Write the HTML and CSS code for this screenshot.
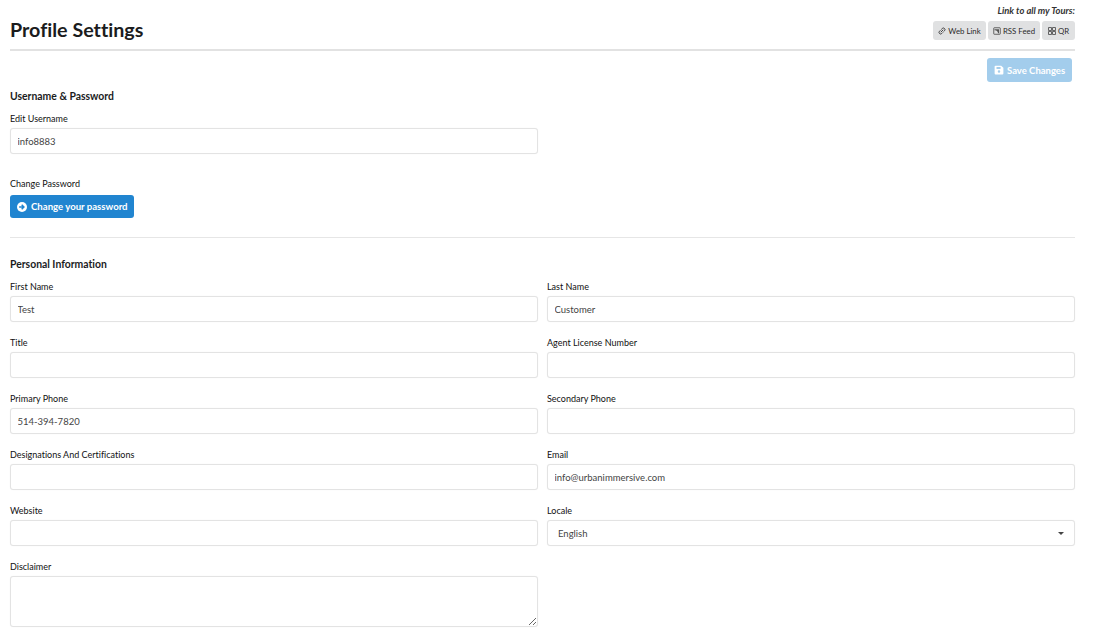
FILE: index.html
```html
<!DOCTYPE html>
<html lang="en">
<head>
<meta charset="utf-8">
<title>Profile Settings</title>
<link rel="stylesheet" href="styles.css">
</head>
<body>
<div class="page">
  <header class="header">
    <h1 class="title">Profile Settings</h1>
    <div class="tours">
      <div class="tours-label">Link to all my Tours:</div>
      <div class="tour-buttons">
        <button class="tour-btn" type="button">
          <svg class="ico" viewBox="0 0 16 16"><path d="M6 10l4-4M7 4.500l1.500-1.500a3 3 0 0 1 4.500 4.500L11.500 9M9 11.500l-1.500 1.500a3 3 0 0 1-4.500-4.500L4.500 7" fill="none" stroke="#333" stroke-width="1.800" stroke-linecap="round"/></svg>Web Link</button>
        <button class="tour-btn" type="button">
          <svg class="ico" viewBox="0 0 16 16"><rect x="1.500" y="1.500" width="13" height="13" rx="1" fill="none" stroke="#444" stroke-width="1.600"/><path d="M3 4.500h9v8h-2a6 6 0 0 0-7-6z" fill="#555"/></svg>RSS Feed</button>
        <button class="tour-btn" type="button">
          <svg class="ico" viewBox="0 0 16 16"><path d="M1 1h6v6H1zM9 1h6v6H9zM1 9h6v6H1zM9 9h6v6H9z" fill="none" stroke="#555" stroke-width="1.800"/></svg>QR</button>
      </div>
    </div>
  </header>

  <div class="save-row">
    <button class="save-btn" type="button">
      <svg class="save-ico" viewBox="0 0 16 16"><path fill-rule="evenodd" d="M2.500 1h9l3.500 3.500v9a1.500 1.500 0 0 1-1.500 1.500h-11A1.500 1.500 0 0 1 1 13.500v-11A1.500 1.500 0 0 1 2.500 1zM4 3v3.500h6.500V3zM8 8.500a2 2 0 1 0 0 4 2 2 0 0 0 0-4z" fill="#fff"/></svg>Save Changes</button>
  </div>

  <h2 class="section-title first">Username &amp; Password</h2>
  <div class="half">
    <label class="label">Edit Username</label>
    <input class="input" type="text" value="info8883">
  </div>

  <div class="password">
    <label class="label">Change Password</label>
    <button class="primary-btn" type="button">
      <svg class="arrow-ico" viewBox="0 0 16 16"><circle cx="8" cy="8" r="8" fill="#fff"/><path d="M3.500 8h7M7.500 4.500L11 8l-3.500 3.500" fill="none" stroke="#2185d0" stroke-width="2.400"/></svg>Change your password</button>
  </div>

  <hr class="divider">

  <h2 class="section-title">Personal Information</h2>
  <div class="grid">
    <div class="field"><label class="label">First Name</label><input class="input" type="text" value="Test"></div>
    <div class="field"><label class="label">Last Name</label><input class="input" type="text" value="Customer"></div>
    <div class="field"><label class="label">Title</label><input class="input" type="text"></div>
    <div class="field"><label class="label">Agent License Number</label><input class="input" type="text"></div>
    <div class="field"><label class="label">Primary Phone</label><input class="input" type="text" value="514-394-7820"></div>
    <div class="field"><label class="label">Secondary Phone</label><input class="input" type="text"></div>
    <div class="field"><label class="label">Designations And Certifications</label><input class="input" type="text"></div>
    <div class="field"><label class="label">Email</label><input class="input" type="text" value="info@urbanimmersive.com"></div>
    <div class="field"><label class="label">Website</label><input class="input" type="text"></div>
    <div class="field"><label class="label">Locale</label><div class="select"><span>English</span><span class="caret"></span></div></div>
    <div class="field"><label class="label">Disclaimer</label><textarea class="textarea"></textarea></div>
  </div>
</div>
</body>
</html>
```
FILE: styles.css
```css
* { box-sizing: border-box; }
html, body { margin: 0; padding: 0; background: #fff; }
body {
  font-family: Lato, "Liberation Sans", sans-serif;
  font-variant-ligatures: none;
  color: #1f1f1f;
  height: 643px;
  overflow: hidden;
}
.page { padding: 0 25px 0 10px; }
.header {
  display: flex;
  justify-content: space-between;
  align-items: flex-start;
  height: 51px;
  border-bottom: 2px solid #e2e2e2;
}
.title {
  margin: 17px 0 0;
  font-size: 19.700px;
  line-height: 26px;
  font-weight: 700;
  color: #1b1c1d;
}
.tours { display: flex; flex-direction: column; align-items: flex-end; padding-top: 5px; }
.tours-label {
  font-size: 9.400px;
  line-height: 12px;
  font-weight: 700;
  font-style: italic;
  color: #333;
}
.tour-buttons { display: flex; gap: 2px; margin-top: 4px; }
.tour-btn {
  display: flex;
  align-items: center;
  justify-content: center;
  gap: 2px;
  height: 19px;
  padding: 0;
  border: 0;
  border-radius: 3px;
  background: #e0e1e2;
  color: #2a2a2a;
  font: 400 7.800px Lato, sans-serif;
  font-variant-ligatures: none;
}
.tour-btn:nth-child(1) { width: 53px; }
.tour-btn:nth-child(2) { width: 52px; }
.tour-btn:nth-child(3) { width: 33px; }
.ico { width: 8px; height: 8px; }
.save-row { display: flex; justify-content: flex-end; padding: 7px 3px 0 0; }
.save-btn {
  display: flex;
  align-items: center;
  gap: 3px;
  height: 24px;
  width: 85px;
  padding: 0 0 0 7px;
  border: 0;
  border-radius: 3px;
  background: #a3cdec;
  color: #fff;
  font: 700 9.500px Lato, sans-serif;
}
.save-ico { width: 10px; height: 10px; }
.section-title {
  margin: 0;
  font-size: 10.400px;
  line-height: 14px;
  font-weight: 700;
  color: #1b1c1d;
}
.section-title.first { margin-top: 7px; }
.half { width: 528px; margin-top: 10px; }
.label {
  display: block;
  font-size: 9px;
  line-height: 12px;
  color: #111;
  margin-bottom: 3px;
}
.input, .select, .textarea {
  display: block;
  width: 100%;
  border: 1px solid #e3e3e3;
  border-radius: 3px;
  background: #fff;
  box-shadow: 0 0 1px rgba(0,0,0,.08);
  font-family: Lato, sans-serif;
  font-size: 9.500px;
  color: #444;
  outline: none;
}
.input { height: 26px; padding: 0 6.500px; font-variant-ligatures: none; }
.password { margin-top: 24px; }
.primary-btn {
  display: flex;
  align-items: center;
  gap: 4px;
  width: 124px;
  height: 23px;
  margin-top: 5px;
  padding: 0 0 0 7px;
  border: 0;
  border-radius: 3px;
  background: #2185d0;
  color: #fff;
  font: 700 9.600px Lato, sans-serif;
}
.arrow-ico { width: 10px; height: 10px; }
.divider { margin: 19px 0 19px; border: 0; border-top: 1px solid #e6e6e6; }
.grid {
  display: grid;
  grid-template-columns: 1fr 1fr;
  column-gap: 9px;
  row-gap: 15px;
  margin-top: 10px;
}
.select {
  display: flex;
  align-items: center;
  justify-content: space-between;
  height: 26px;
  padding: 0 10px;
}
.caret {
  width: 0;
  height: 0;
  border-left: 3px solid transparent;
  border-right: 3px solid transparent;
  border-top: 3px solid #444;
}
.textarea { height: 51px; padding: 5px 7px; resize: vertical; }
```
